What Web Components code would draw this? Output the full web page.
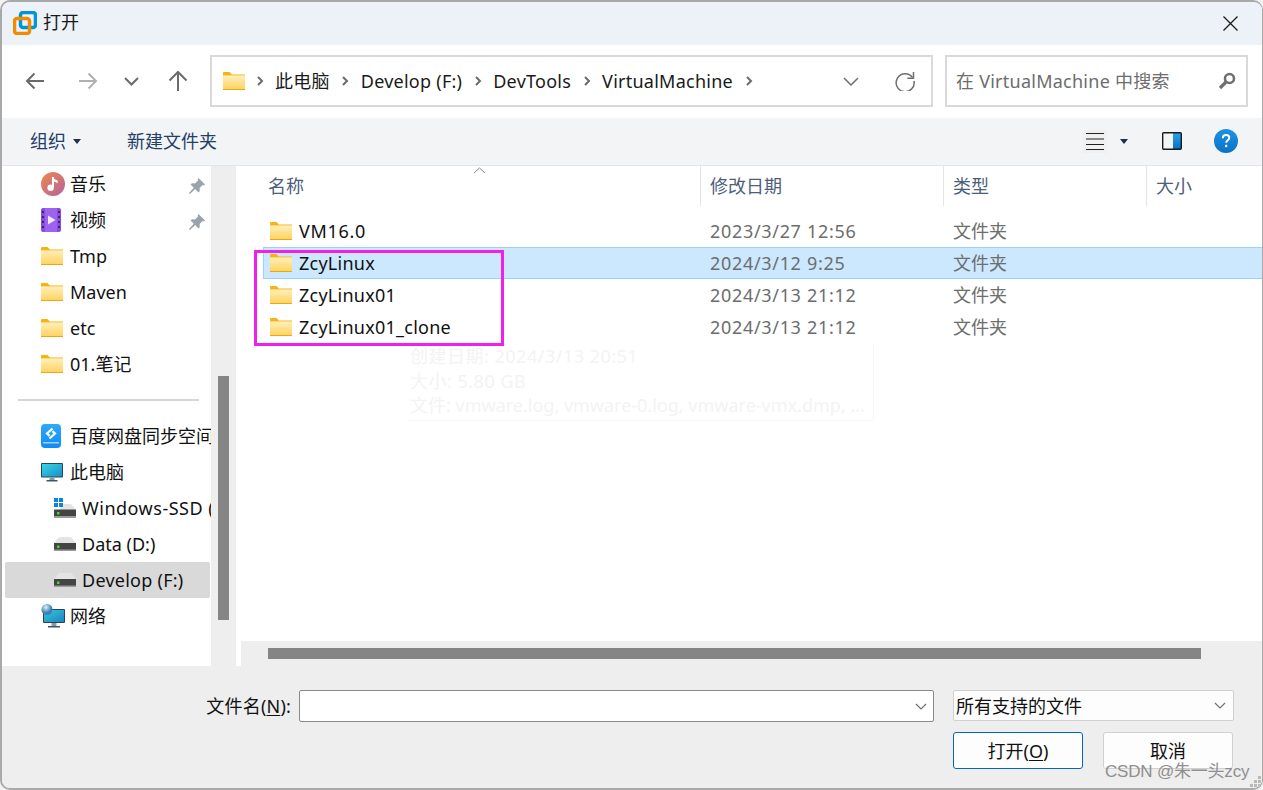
<!DOCTYPE html>
<html lang="zh">
<head>
<meta charset="utf-8">
<title>打开</title>
<style>
    html, body { margin: 0; padding: 0; height: 790px; overflow: hidden; background: #f2f2f2; }
    body { font-family: "Noto Sans", "Noto Sans CJK SC", sans-serif; font-size: 18px; }
</style>
</head>
<body>
<open-dialog>
    <title-bar slot="title">打开</title-bar>
    <nav-bar slot="nav"></nav-bar>
    <tool-bar slot="tools"></tool-bar>
    <side-nav slot="side">
        <side-item icon="music" pin>音乐</side-item>
        <side-item icon="video" pin>视频</side-item>
        <side-item icon="folder">Tmp</side-item>
        <side-item icon="folder">Maven</side-item>
        <side-item icon="folder">etc</side-item>
        <side-item icon="folder">01.笔记</side-item>
        <side-sep></side-sep>
        <side-item icon="baidu">百度网盘同步空间</side-item>
        <side-item icon="pc">此电脑</side-item>
        <side-item icon="winssd" child spacing=".5">Windows-SSD (C:)</side-item>
        <side-item icon="drive" child>Data (D:)</side-item>
        <side-item icon="drive" child active spacing=".25">Develop (F:)</side-item>
        <side-item icon="net">网络</side-item>
    </side-nav>
    <file-list slot="files">
        <file-row date="2023/3/27 12:56" kind="文件夹" spacing=".7">VM16.0</file-row>
        <file-row date="2024/3/12 9:25" kind="文件夹" selected>ZcyLinux</file-row>
        <file-row date="2024/3/13 21:12" kind="文件夹">ZcyLinux01</file-row>
        <file-row date="2024/3/13 21:12" kind="文件夹">ZcyLinux01_clone</file-row>
    </file-list>
    <dialog-footer slot="footer"></dialog-footer>
</open-dialog>

<script>
    const ICONS = {
        folder: `<svg width="22" height="18" viewBox="0 0 22 18"><defs><linearGradient id="f" x1="0" y1="0" x2="0" y2="1"><stop offset="0" stop-color="#ffefbd"/><stop offset="1" stop-color="#ffd25a"/></linearGradient></defs><path d="M0 1.200C0 .5.5 0 1.200 0h5.300l2.400 2.600H22V5H0z" fill="#f8b40e"/><rect x="0" y="3.400" width="22" height="14.600" fill="url(#f)"/><rect x="0" y="17" width="22" height="1" fill="#eaa71a"/></svg>`,
        music: `<svg width="24" height="24" viewBox="0 0 24 24"><defs><linearGradient id="m" x1="0" y1="0" x2="1" y2="1"><stop offset="0" stop-color="#f0884c"/><stop offset="1" stop-color="#b4629e"/></linearGradient></defs><circle cx="12" cy="12" r="12" fill="url(#m)"/><path d="M12 5v10.400" stroke="#fff" stroke-width="2" fill="none"/><circle cx="9.600" cy="15.800" r="3.200" fill="#fff"/><path d="M12 5c.6 2.600 3.400 2.600 4.600 3.600v2.600c-1.600-1-3.600-1.200-4.600-2.400z" fill="#fff"/></svg>`,
        video: `<svg width="20" height="24" viewBox="0 0 20 24"><rect width="20" height="24" rx="2" fill="#8a4be0"/><rect x="4" y="0" width="12" height="24" fill="#9e63ee"/><g fill="#3e2468"><rect x="1" y="3" width="2" height="2"/><rect x="1" y="8" width="2" height="2"/><rect x="1" y="13" width="2" height="2"/><rect x="1" y="18" width="2" height="2"/><rect x="17" y="3" width="2" height="2"/><rect x="17" y="8" width="2" height="2"/><rect x="17" y="13" width="2" height="2"/><rect x="17" y="18" width="2" height="2"/></g><path d="M7 7.500l7.500 4.500L7 16.500z" fill="#efe8fb"/></svg>`,
        baidu: `<svg width="20" height="24" viewBox="0 0 20 24"><defs><linearGradient id="b" x1="0" y1="0" x2="0" y2="1"><stop offset="0" stop-color="#2fa8f8"/><stop offset="1" stop-color="#0f8cf4"/></linearGradient></defs><path d="M4 0h12a4 4 0 0 1 4 4v16a4 4 0 0 1-4 4H4a4 4 0 0 1-4-4V4a4 4 0 0 1 4-4z" fill="url(#b)"/><path d="M11.500 4.500L6 9.500l2.600 2.400M8.500 14.500l5.500-5-2.600-2.400" stroke="#fff" stroke-width="2.200" fill="none"/><rect x="2" y="18" width="16" height="1.500" fill="#9cd4fb"/></svg>`,
        pc: `<svg width="22" height="19" viewBox="0 0 22 19"><defs><linearGradient id="p" x1="0" y1="0" x2="1" y2="1"><stop offset="0" stop-color="#35d6e6"/><stop offset="1" stop-color="#1b8fc9"/></linearGradient></defs><rect width="22" height="14.500" rx="1" fill="#2c4252"/><rect x="1" y="1" width="20" height="12.500" fill="url(#p)"/><rect x="8.500" y="14.500" width="5" height="2.500" fill="#8a9aa5"/><rect x="5.500" y="17" width="11" height="1.500" fill="#3d5666"/></svg>`,
        drive: `<svg width="22" height="14" viewBox="0 0 22 14"><path d="M5 0h12l5 6H0z" fill="#e4e4e4"/><rect x="0" y="6" width="22" height="7.500" fill="#444"/><rect x="0" y="12.500" width="22" height="1.500" fill="#9b9b9b"/><rect x="3" y="8.500" width="2.500" height="2.500" fill="#45d62f"/></svg>`,
        winssd: `<svg width="22" height="20" viewBox="0 0 22 20"><path d="M9 6h8l5 6H5z" fill="#e4e4e4"/><rect x="0" y="11.500" width="22" height="7" fill="#444"/><rect x="0" y="18" width="22" height="2" fill="#9b9b9b"/><rect x="3" y="14" width="2.500" height="2.500" fill="#45d62f"/><g fill="#0a84e0"><rect x="0" y="0" width="4" height="4"/><rect x="5" y="0" width="4" height="4"/><rect x="0" y="5" width="4" height="4"/><rect x="5" y="5" width="4" height="4"/></g></svg>`,
        net: `<svg width="24" height="24" viewBox="0 0 24 24"><defs><linearGradient id="n" x1="0" y1="0" x2="1" y2="1"><stop offset="0" stop-color="#35c6e0"/><stop offset="1" stop-color="#1b86bd"/></linearGradient><radialGradient id="g" cx=".4" cy=".3"><stop offset="0" stop-color="#dff0fb"/><stop offset="1" stop-color="#3d7fb5"/></radialGradient></defs><rect x="2" y="5" width="22" height="14" rx="1" fill="#2c4252"/><rect x="3" y="6" width="20" height="12" fill="url(#n)"/><rect x="10.500" y="19" width="5" height="3" fill="#8a9aa5"/><rect x="7" y="22" width="12" height="1.500" fill="#3d5666"/><circle cx="6" cy="5.500" r="5.500" fill="url(#g)"/></svg>`,
        pin: `<svg width="16" height="16" viewBox="0 0 16 16"><path d="M9.500 0L16 6.500l-1.400 1-1-.4-3 3 .2 3-1.300 1.300-3.300-3.300L1.400 15.600 0 16l.4-1.500 4.400-4.800-3.200-3.200L3 5.200l3 .2 3-3-.3-1.200z" fill="#9aa3aa"/></svg>`,
        chev: `<svg width="8" height="12" viewBox="0 0 8 12"><path d="M2 2l4 4-4 4" stroke="#6b6b6b" stroke-width="2" fill="none"/></svg>`,
        down: `<svg width="16" height="9" viewBox="0 0 16 9"><path d="M1 1l7 7 7-7" stroke="#6f6f6f" stroke-width="1.500" fill="none"/></svg>`,
        smalldown: `<svg width="12" height="7" viewBox="0 0 12 7"><path d="M1 1l5 5 5-5" stroke="#6f6f6f" stroke-width="1.200" fill="none"/></svg>`,
        caret: `<svg width="8" height="5" viewBox="0 0 8 5"><path d="M0 0h8L4 5z" fill="#1e2f52"/></svg>`
    };

    function iconHtml(name) {
        return ICONS[name] || "";
    }

    class OpenDialog extends HTMLElement {
        constructor() {
            super();
            this.shadow = this.attachShadow({mode: 'open'});
            this.shadow.innerHTML = `
            <style>
                :host {
                    display: flex; flex-direction: column; box-sizing: border-box;
                    width: 1263px; height: 790px; position: relative;
                    border: 2px solid #a9a9a9; border-right-width: 1px; border-radius: 10px;
                    background: #eeeeee; overflow: hidden;
                }
                .main { display: flex; height: 500px; border-top: 1px solid #e3e5e8; }
                .mark {
                    position: absolute; left: 1103px; top: 759px; font-size: 17px; line-height: 22px; letter-spacing: -.2px;
                    color: #8f8f8f; font-family: "Liberation Sans", "Noto Sans CJK SC", sans-serif;
                    white-space: nowrap;
                }
            </style>
            <slot name="title"></slot>
            <slot name="nav"></slot>
            <slot name="tools"></slot>
            <div class="main"><slot name="side"></slot><slot name="files"></slot></div>
            <slot name="footer"></slot>
            <div class="mark">CSDN @朱一头zcy</div>`;
        }
    }

    class TitleBar extends HTMLElement {
        constructor() {
            super();
            this.shadow = this.attachShadow({mode: 'open'});
            this.shadow.innerHTML = `
            <style>
                :host {
                    display: flex; align-items: center; height: 43px; box-sizing: border-box;
                    padding: 0 24px 1px 11px; background: #edf2f8; color: #1a1a1a; font-size: 18px;
                }
                svg { display: block; margin-right: 6px; }
                span { flex: 1; line-height: 24px; margin-top: -2px; }
            </style>
            <svg width="24" height="24" viewBox="0 0 24 24">
                <rect x="7.500" y="1.500" width="15" height="15" rx="2.500" fill="none" stroke="#0095d9" stroke-width="3.500"/>
                <rect x="1.500" y="7.500" width="15" height="15" rx="2.500" fill="none" stroke="#f38b00" stroke-width="3.500"/>
            </svg>
            <span><slot></slot></span>
            <svg style="margin:0" width="15" height="15" viewBox="0 0 15 15"><path d="M.5.500l14 14M14.500.500l-14 14" stroke="#1a1a1a" stroke-width="1.300"/></svg>`;
        }
    }

    class NavBar extends HTMLElement {
        constructor() {
            super();
            this.shadow = this.attachShadow({mode: 'open'});
            const crumbs = ["此电脑", "Develop (F:)", "DevTools", "VirtualMachine"];
            const path = crumbs.map(c => `<span class="c">${iconHtml('chev')}</span><span class="t">${c}</span>`).join('');
            this.shadow.innerHTML = `
            <style>
                :host {
                    display: flex; align-items: center; height: 73px; box-sizing: border-box;
                    padding: 0 14px 1px 0; background: #fff; color: #1a1a1a; font-size: 18px;
                }
                .btns { display: flex; align-items: center; width: 208px; flex: none; }
                .btns svg { display: block; flex: none; }
                .box {
                    display: flex; align-items: center; box-sizing: border-box; height: 52px;
                    border: 2px solid #d9d9d9; background: #fff;
                }
                .addr { width: 723px; padding-left: 11px; flex: none; margin-right: 12px; }
                .addr > svg { display: block; flex: none; }
                .c { width: 31px; display: flex; justify-content: center; flex: none; }
                .c svg { display: block; }
                .c:first-of-type { width: 30px; }
                .t { white-space: nowrap; line-height: 24px; letter-spacing: .25px; }
                .last { width: 32px; }
                .grow { flex: 1; }
                .search { flex: 1; padding: 0 10px 0 9px; color: #6d6d6d; justify-content: space-between; }
            </style>
            <div class="btns">
                <svg style="margin-left:23px" width="20" height="18" viewBox="0 0 20 18"><path d="M19 9H2M9.500 1.500L2 9l7.500 7.500" stroke="#6a6a6a" stroke-width="2" fill="none"/></svg>
                <svg style="margin-left:33px" width="20" height="18" viewBox="0 0 20 18"><path d="M1 9h17M10.500 1.500L18 9l-7.500 7.500" stroke="#b0b0b0" stroke-width="2" fill="none"/></svg>
                <svg style="margin-left:26px" width="15" height="9" viewBox="0 0 15 9"><path d="M1 1l6.500 6.500L14 1" stroke="#6a6a6a" stroke-width="2" fill="none"/></svg>
                <svg style="margin-left:29px" width="20" height="22" viewBox="0 0 20 22"><path d="M10 21V2M1.500 10.500L10 2l8.500 8.500" stroke="#6a6a6a" stroke-width="2" fill="none"/></svg>
            </div>
            <div class="box addr">
                ${iconHtml('folder')}
                ${path}
                <span class="c last">${iconHtml('chev')}</span>
                <span class="grow"></span>
                ${iconHtml('down')}
                <svg style="margin:0 16px 0 36px;display:block" width="20" height="20" viewBox="0 0 20 20"><path d="M17.500 6.500A9 9 0 1 0 19 10" stroke="#6f6f6f" stroke-width="1.500" fill="none"/><path d="M18.500 1v6.200h-6.200" stroke="#6f6f6f" stroke-width="1.500" fill="none"/></svg>
            </div>
            <div class="box search">
                <span class="t">在 VirtualMachine 中搜索</span>
                <svg width="18" height="18" viewBox="0 0 18 18"><circle cx="11.500" cy="6.500" r="4.500" fill="none" stroke="#6f6f6f" stroke-width="2.600"/><path d="M8 10l-6 6" stroke="#6f6f6f" stroke-width="3.200"/></svg>
            </div>`;
        }
    }

    class ToolBar extends HTMLElement {
        constructor() {
            super();
            this.shadow = this.attachShadow({mode: 'open'});
            this.shadow.innerHTML = `
            <style>
                :host {
                    display: flex; align-items: center; height: 47px; box-sizing: border-box;
                    padding: 0 24px 1px 28px; background: #f3f4f6; color: #1f3f68; font-size: 18px;
                }
                svg { display: block; flex: none; }
                span { line-height: 24px; white-space: nowrap; }
                .grow { flex: 1; }
                .view { background: #f0f0f0; padding: 3px; margin-right: 13px; }
            </style>
            <span>组织</span>
            <svg style="margin:0 0 0 7px" width="8" height="5" viewBox="0 0 8 5"><path d="M0 0h8L4 5z" fill="#1e2f52"/></svg>
            <span style="margin-left:46px">新建文件夹</span>
            <span class="grow"></span>
            <div class="view"><svg width="18" height="17" viewBox="0 0 18 17"><path d="M0 .500h18M0 6h18M0 11.500h18M0 16.500h18" stroke="#222" stroke-width="1"/></svg></div>
            ${iconHtml('caret')}
            <svg style="margin:0 32px 0 34px" width="20" height="18" viewBox="0 0 20 18"><defs><linearGradient id="v" x1="0" y1="0" x2="0" y2="1"><stop offset="0" stop-color="#27a2ea"/><stop offset="1" stop-color="#0a6fc4"/></linearGradient></defs><rect x="11" y="1" width="8" height="16" fill="url(#v)"/><rect x=".7" y=".7" width="18.600" height="16.600" rx="1" fill="none" stroke="#1a1a1a" stroke-width="1.400"/></svg>
            <svg width="24" height="24" viewBox="0 0 24 24"><defs><linearGradient id="h" x1="0" y1="0" x2="0" y2="1"><stop offset="0" stop-color="#1e92e2"/><stop offset="1" stop-color="#0a72c8"/></linearGradient></defs><circle cx="12" cy="12" r="12" fill="url(#h)"/><path d="M8.800 9.200c0-2 1.500-3.200 3.300-3.200s3.200 1.100 3.200 2.800c0 2.500-3.100 2.500-3.100 5" fill="none" stroke="#fff" stroke-width="1.900"/><rect x="11.100" y="15.800" width="2.100" height="2.300" fill="#fff"/></svg>`;
        }
    }

    class SideNav extends HTMLElement {
        constructor() {
            super();
            this.shadow = this.attachShadow({mode: 'open'});
            this.shadow.innerHTML = `
            <style>
                :host { display: flex; flex: none; width: 239px; height: 500px; }
                .list { width: 209px; background: #fff; overflow: hidden; flex: none; }
                .gutter { width: 25px; background: #eeeeee; flex: none; padding: 210px 0 0 7px; box-sizing: border-box; }
                .thumb { width: 11px; height: 244px; background: #858585; }
                .edge { width: 5px; background: #fff; }
            </style>
            <div class="list"><slot></slot></div>
            <div class="gutter"><div class="thumb"></div></div>
            <div class="edge"></div>`;
        }
    }

    class SideSep extends HTMLElement {
        constructor() {
            super();
            this.attachShadow({mode: 'open'}).innerHTML = `
            <style>
                :host { display: block; height: 36px; box-sizing: border-box; padding: 17px 12px 0 16px; }
                div { height: 2px; background: #d6d6d6; }
            </style><div></div>`;
        }
    }

    class SideItem extends HTMLElement {
        constructor() {
            super();
            this.shadow = this.attachShadow({mode: 'open'});
        }
        connectedCallback() {
            const child = this.hasAttribute('child');
            const active = this.hasAttribute('active');
            const pin = this.hasAttribute('pin');
            const spacing = this.getAttribute('spacing') || 0;
            this.shadow.innerHTML = `
            <style>
                :host {
                    display: flex; align-items: center; height: 36px; box-sizing: border-box;
                    padding-left: ${child ? 52 : 39}px; color: #111; font-size: 18px; position: relative;
                    white-space: nowrap; overflow: hidden;
                    ${active ? 'background: #d9d9d9; border-radius: 2px; margin: 0 1px 0 3px; padding-left: 49px;' : ''}
                }
                .ic { width: ${child ? 28 : 29}px; display: flex; align-items: center; flex: none; height: 24px; }
                .ic svg { display: block; }
                .txt { line-height: 24px; letter-spacing: ${spacing}px; }
                .pin { position: absolute; right: 6px; top: 9px; width: 16px; height: 16px; }
            </style>
            <span class="ic">${iconHtml(this.getAttribute('icon'))}</span>
            <span class="txt"><slot></slot></span>
            ${pin ? `<span class="pin">${iconHtml('pin')}</span>` : ''}`;
        }
    }

    class FileList extends HTMLElement {
        constructor() {
            super();
            this.shadow = this.attachShadow({mode: 'open'});
            this.shadow.innerHTML = `
            <style>
                :host {
                    display: flex; flex-direction: column; width: 1022px; height: 500px; flex: none;
                    background: #fff; position: relative; color: #4c607a; overflow: hidden;
                }
                .head {
                    display: grid; grid-template-columns: 460px 243px 203px 1fr; height: 41px; flex: none;
                }
                .head div { position: relative; padding: 8px 0 0 9px; line-height: 24px; border-right: 1px solid #e5e5e5; font-size: 18px; height: 32px; }
                .head div:first-child { padding-left: 27px; }
                .head div:last-child { border-right: 0; }
                .arrow { position: absolute; left: 232px; top: 1px; display: block; }
                .rows { flex: 1; padding-top: 8px; }
                .hbar { height: 25px; background: #eeeeee; flex: none; padding: 7px 0 0 27px; box-sizing: border-box; }
                .hbar div { width: 933px; height: 11px; background: #858585; }
                .ghost {
                    position: absolute; left: 167px; top: 178px; width: 466px; height: 77px; box-sizing: border-box;
                    padding: 0 0 0 2px; color: #f3f3f3; border-right: 1px solid #f8f8f8; border-bottom: 1px solid #f8f8f8;
                    font-size: 18px; line-height: 24.500px; white-space: nowrap;
                }
                .ghost span { letter-spacing: .5px; }
                .box {
                    position: absolute; left: 13px; top: 84px; width: 250px; height: 96px;
                    box-sizing: border-box; border: 3px solid #f01fee;
                }
            </style>
            <div class="head">
                <div>名称<svg class="arrow" width="13" height="7" viewBox="0 0 13 7"><path d="M1 6l5.500-5L12 6" stroke="#8a8a8a" fill="none"/></svg></div>
                <div>修改日期</div><div>类型</div><div>大小</div>
            </div>
            <div class="rows"><slot></slot></div>
            <div class="hbar"><div></div></div>
            <div class="ghost"><span>创建日期: 2024/3/13 20:51</span><br><span>大小: 5.80 GB</span><br>文件: vmware.log, vmware-0.log, vmware-vmx.dmp, ...</div>
            <div class="box"></div>`;
        }
    }

    class FileRow extends HTMLElement {
        constructor() {
            super();
            this.shadow = this.attachShadow({mode: 'open'});
        }
        connectedCallback() {
            const sel = this.hasAttribute('selected');
            const spacing = this.getAttribute('spacing') || .25;
            this.shadow.innerHTML = `
            <style>
                :host {
                    display: grid; grid-template-columns: 440px 243px 1fr; align-items: center;
                    height: 32px; box-sizing: border-box; margin-left: 22px; padding-left: 7px;
                    ${sel ? 'background: #cce8ff; box-shadow: inset 0 0 0 1px #99d1ff;' : ''}
                    font-size: 18px;
                }
                .name { display: flex; align-items: center; color: #111; white-space: nowrap; line-height: 24px; letter-spacing: ${spacing}px; }
                .name svg { display: block; margin-right: 7px; flex: none; }
                .sub { color: #6d6d6d; line-height: 24px; white-space: nowrap; }
                .date { letter-spacing: .68px; }
            </style>
            <div class="name">${iconHtml('folder')}<slot></slot></div>
            <div class="sub date">${this.getAttribute('date')}</div>
            <div class="sub">${this.getAttribute('kind')}</div>`;
        }
    }

    class DialogFooter extends HTMLElement {
        constructor() {
            super();
            this.shadow = this.attachShadow({mode: 'open'});
            this.shadow.innerHTML = `
            <style>
                :host {
                    display: grid; grid-template-columns: 297px 635px 281px; grid-template-rows: 32px auto; align-content: start;
                    height: 122px; box-sizing: border-box;
                    padding: 24px 0 0 0; background: #eeeeee; color: #111; font-size: 18px; position: relative;
                }
                .label { text-align: right; padding-right: 8px; line-height: 32px; white-space: nowrap; box-sizing: border-box; letter-spacing: .2px; }
                u { text-underline-offset: 2px; }
                .input {
                    display: flex; align-items: center; justify-content: flex-end; height: 32px; box-sizing: border-box;
                    background: #fff; border: 1px solid #8a8a8a; border-radius: 2px; padding-right: 6px;
                }
                .select {
                    display: flex; align-items: center; justify-content: space-between; height: 31px; box-sizing: border-box;
                    background: #fdfdfd; border: 1px solid #d0d0d0; border-radius: 2px; padding: 0 7px 0 2px; margin-left: 19px; line-height: 24px; width: 281px;
                }
                .actions { grid-column: 3; display: flex; gap: 20px; margin: 10px 0 0 19px; width: 281px; }
                .btn {
                    width: 130px; height: 37px; box-sizing: border-box; display: flex; align-items: center; justify-content: center;
                    background: #fdfdfd; border: 1px solid #d0d0d0; border-radius: 3px; line-height: 24px;
                }
                .btn.def { border: 1.500px solid #0067c0; }
                .grip { position: absolute; right: 0; bottom: 0; display: block; }
            </style>
            <div class="label">文件名(<u>N</u>):</div>
            <div class="input">${iconHtml('smalldown')}</div>
            <div class="select"><span>所有支持的文件</span>${iconHtml('smalldown')}</div>
            <div class="actions">
                <div class="btn def">打开(<u>O</u>)</div>
                <div class="btn">取消</div>
            </div>
            <svg class="grip" width="12" height="12" viewBox="0 0 12 12" fill="#b9b9b9"><rect x="8" y="0" width="3" height="3"/><rect x="4" y="4" width="3" height="3"/><rect x="8" y="4" width="3" height="3"/><rect x="0" y="8" width="3" height="3"/><rect x="4" y="8" width="3" height="3"/><rect x="8" y="8" width="3" height="3"/></svg>`;
        }
    }

    window.customElements.define('title-bar', TitleBar);
    window.customElements.define('nav-bar', NavBar);
    window.customElements.define('tool-bar', ToolBar);
    window.customElements.define('side-nav', SideNav);
    window.customElements.define('side-sep', SideSep);
    window.customElements.define('side-item', SideItem);
    window.customElements.define('file-list', FileList);
    window.customElements.define('file-row', FileRow);
    window.customElements.define('dialog-footer', DialogFooter);
    window.customElements.define('open-dialog', OpenDialog);
</script>
</body>
</html>
